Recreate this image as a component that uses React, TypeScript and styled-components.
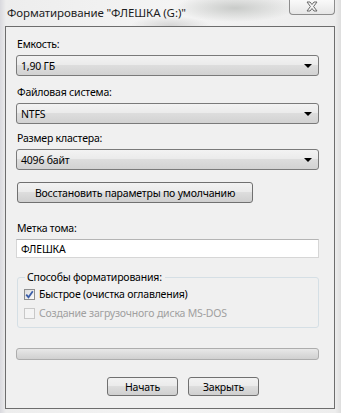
import { FC } from "react";
import styled, { createGlobalStyle } from "styled-components";

const GlobalStyle = createGlobalStyle`
  html, body {
    margin: 0;
    padding: 0;
    background: #ececec;
  }

  #root {
    width: 341px;
    height: 413px;
  }
`;

const ComboBox: FC<{ value: string }> = ({ value }) => (
  <Combo>
    <span>{value}</span>
    <Arrow />
  </Combo>
);

const CheckRow: FC<{ checked?: boolean; disabled?: boolean; label: string }> = ({
  checked,
  disabled,
  label,
}) => (
  <Row $disabled={disabled}>
    <Box $disabled={disabled}>
      {checked && (
        <svg width="9" height="9" viewBox="0 0 9 9">
          <path d="M1.2 4.6 L3.5 7.2 L7.8 1.3" fill="none" stroke="#3b5ea8" strokeWidth="1.8" />
        </svg>
      )}
    </Box>
    {label}
  </Row>
);

const App: FC = () => {
  return (
    <Window>
      <GlobalStyle />
      <TitleBar>
        <Title>Форматирование "ФЛЕШКА (G:)"</Title>
        <CloseButton>
          <svg width="14" height="11" viewBox="0 0 14 11">
            <path
              d="M2 1 L5 1 L7 3.5 L9 1 L12 1 L8.6 5.5 L12 10 L9 10 L7 7.5 L5 10 L2 10 L5.4 5.5 Z"
              fill="#f4f4f4"
              stroke="#6a6a6a"
              strokeWidth="1"
              strokeLinejoin="round"
            />
          </svg>
        </CloseButton>
      </TitleBar>

      <Client>
        <Label $top={11}>Емкость:</Label>
        <ComboBox value="1,90 ГБ" />

        <Label $top={10}>Файловая система:</Label>
        <ComboBox value="NTFS" />

        <Label $top={8}>Размер кластера:</Label>
        <ComboBox value="4096 байт" />

        <WideButton>Восстановить параметры по умолчанию</WideButton>

        <Label $top={19}>Метка тома:</Label>
        <TextInput>ФЛЕШКА</TextInput>

        <Group>
          <Legend>Способы форматирования:</Legend>
          <CheckRow checked label="Быстрое (очистка оглавления)" />
          <CheckRow disabled label="Создание загрузочного диска MS-DOS" />
        </Group>

        <Progress />

        <Buttons>
          <Button>Начать</Button>
          <Button>Закрыть</Button>
        </Buttons>
      </Client>
    </Window>
  );
};

export default App;

const Window = styled.div`
  width: 341px;
  height: 413px;
  box-sizing: border-box;
  display: flex;
  flex-direction: column;
  padding: 0 6px 4px 5px;
  background:
    radial-gradient(ellipse 60px 14px at 235px 8px, #c9cbc9 0%, rgba(230, 230, 230, 0) 100%),
    radial-gradient(ellipse 40px 10px at 170px 26px, #d4d4d4 0%, rgba(230, 230, 230, 0) 100%),
    linear-gradient(90deg, #d9d9de 0px, #ededed 6px, #f4f4f4 50%, #ededed calc(100% - 6px), #dedede 100%);
  font-family: "Noto Sans", "Open Sans", sans-serif;
  color: #000;
`;

const TitleBar = styled.div`
  height: 26px;
  display: flex;
  align-items: flex-start;
  justify-content: space-between;
`;

const Title = styled.div`
  font-size: 11.5px;
  line-height: 14px;
  letter-spacing: -0.1px;
  margin: 6px 0 0 2px;
  color: #1e1e1e;
`;

const CloseButton = styled.div`
  width: 46px;
  height: 16px;
  box-sizing: border-box;
  margin-top: -1px;
  border: 1px solid #8c8c8c;
  border-top: none;
  border-radius: 0 0 4px 4px;
  background: linear-gradient(180deg, #fbfbfb, #e6e6e6);
  display: flex;
  align-items: center;
  justify-content: center;
`;

const Client = styled.div`
  flex: 1;
  border: 1px solid #6d6d6d;
  background: #f0f0f0;
  display: flex;
  flex-direction: column;
  padding: 0 15px 0 10px;
  font-size: 10.5px;
  letter-spacing: -0.2px;
`;

const Label = styled.div<{ $top: number }>`
  margin-top: ${(p) => p.$top}px;
  line-height: 13px;
  margin-bottom: 4px;
  padding-left: 1px;
`;

const Combo = styled.div`
  height: 21px;
  box-sizing: border-box;
  border: 1px solid #7a7a7a;
  border-radius: 3px;
  background: linear-gradient(180deg, #f3f3f3 0%, #ebebeb 45%, #dddddd 50%, #d2d2d2 100%);
  display: flex;
  align-items: center;
  justify-content: space-between;
  padding: 0 6px 0 4px;
`;

const Arrow = styled.span`
  width: 0;
  height: 0;
  border-left: 4px solid transparent;
  border-right: 4px solid transparent;
  border-top: 4px solid #000;
`;

const WideButton = styled.div`
  width: 236px;
  height: 21px;
  box-sizing: border-box;
  margin: 12px 0 0 1px;
  border: 1px solid #707070;
  border-radius: 3px;
  background: linear-gradient(180deg, #f2f2f2 0%, #ebebeb 45%, #dddddd 50%, #cfcfcf 100%);
  display: flex;
  align-items: center;
  justify-content: center;
`;

const TextInput = styled.div`
  height: 19px;
  box-sizing: border-box;
  border: 1px solid #d6d6d6;
  border-top-color: #b5b5b5;
  background: #fff;
  display: flex;
  align-items: center;
  padding-left: 4px;
`;

const Group = styled.fieldset`
  margin: 13px 0 0 1px;
  padding: 4px 0 8px 6px;
  height: 57px;
  box-sizing: border-box;
  border: 1px solid #d5dfe5;
  border-radius: 3px;
  display: flex;
  flex-direction: column;
  gap: 6px;
`;

const Legend = styled.legend`
  padding: 0 3px 0 2px;
  margin-left: 1px;
  line-height: 13px;
`;

const Row = styled.div<{ $disabled?: boolean }>`
  display: flex;
  align-items: center;
  gap: 4px;
  line-height: 13px;
  color: ${(p) => (p.$disabled ? "#a0a0a0" : "#000")};
`;

const Box = styled.span<{ $disabled?: boolean }>`
  width: 11px;
  height: 11px;
  box-sizing: border-box;
  border: 1px solid ${(p) => (p.$disabled ? "#c8c8c8" : "#8e8f8f")};
  background: ${(p) =>
    p.$disabled ? "#f4f4f4" : "linear-gradient(135deg, #dcdcdc, #fbfbfb)"};
  display: flex;
  align-items: center;
  justify-content: center;
`;

const Progress = styled.div`
  height: 12px;
  margin-top: 20px;
  box-sizing: border-box;
  border: 1px solid #adadad;
  border-radius: 3px;
  background: linear-gradient(180deg, #e8e8e8 0%, #dcdcdc 50%, #d0d0d0 100%);
`;

const Buttons = styled.div`
  display: flex;
  justify-content: flex-end;
  gap: 10px;
  margin-top: 17px;
  padding-right: 60px;
`;

const Button = styled.div`
  width: 71px;
  height: 19px;
  box-sizing: border-box;
  border: 1px solid #707070;
  border-radius: 3px;
  background: linear-gradient(180deg, #f2f2f2 0%, #ebebeb 45%, #dddddd 50%, #cfcfcf 100%);
  display: flex;
  align-items: center;
  justify-content: center;
`;
